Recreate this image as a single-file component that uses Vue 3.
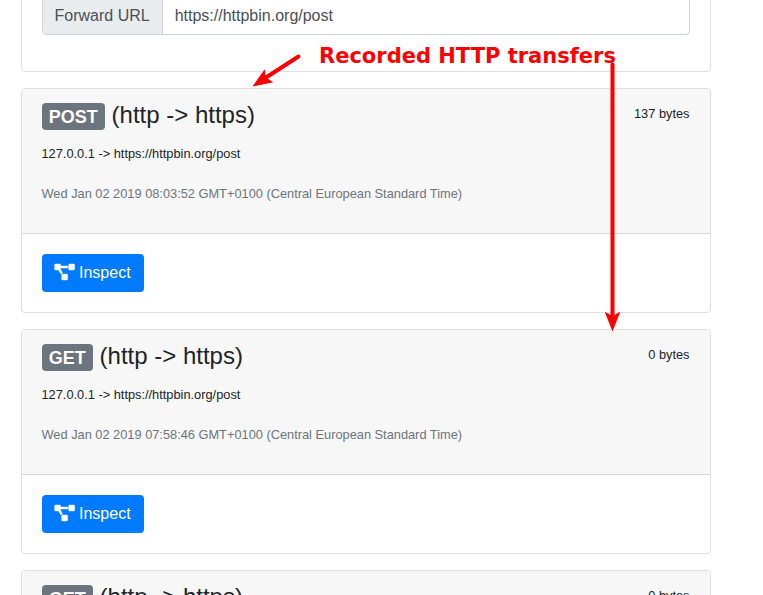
<script setup>
const transfers = [
  { method: 'POST', size: '137 bytes', time: 'Wed Jan 02 2019 08:03:52 GMT+0100 (Central European Standard Time)' },
  { method: 'GET', size: '0 bytes', time: 'Wed Jan 02 2019 07:58:46 GMT+0100 (Central European Standard Time)' },
  { method: 'GET', size: '0 bytes', time: 'Wed Jan 02 2019 07:58:46 GMT+0100 (Central European Standard Time)' },
]
</script>

<template>
  <main class="page">
    <section class="card settings">
      <div class="input-group">
        <span class="prepend">Forward URL</span>
        <span class="field">https://httpbin.org/post</span>
      </div>
    </section>

    <article v-for="(t, i) in transfers" :key="i" class="card">
      <header class="card-header">
        <div class="title-row">
          <h4><span class="badge">{{ t.method }}</span> (http -&gt; https)</h4>
          <small class="size">{{ t.size }}</small>
        </div>
        <p>127.0.0.1 -&gt; https://httpbin.org/post</p>
        <p class="muted">{{ t.time }}</p>
      </header>
      <div class="card-body">
        <button class="btn" type="button">
          <svg class="icon" viewBox="12 0 640 512" aria-hidden="true">
            <path fill="currentColor" stroke="currentColor" stroke-width="14" d="M384 320H256c-17.67 0-32 14.33-32 32v128c0 17.67 14.33 32 32 32h128c17.67 0 32-14.33 32-32V352c0-17.67-14.33-32-32-32zM192 32c0-17.67-14.33-32-32-32H32C14.33 0 0 14.33 0 32v128c0 17.67 14.33 32 32 32h95.72l73.16 128.04C211.98 300.98 232.4 288 256 288h.28L192 175.51V128h224V64H192V32zM608 0H480c-17.67 0-32 14.33-32 32v128c0 17.67 14.33 32 32 32h128c17.67 0 32-14.33 32-32V32c0-17.67-14.33-32-32-32z" />
          </svg>
          <span>Inspect</span>
        </button>
      </div>
    </article>

    <svg class="arrows" width="763" height="595" viewBox="0 0 763 595" aria-hidden="true">
      <g stroke="#f00" stroke-width="4" stroke-linecap="round" fill="none">
        <path d="M298.5 56.5L266 77.5" />
        <path d="M612.5 64.5V318" />
      </g>
      <g fill="#f00">
        <path d="M252.5 86.5L264.7 69.2L265.8 77.6L273.3 82.3Z" />
        <path d="M612.5 331.5L604.7 311.7L612.5 316L620.3 311.7Z" />
      </g>
    </svg>
    <div class="note">Recorded HTTP transfers</div>
  </main>
</template>

<style>
body {
  background: #fff;
}
</style>

<style scoped>
* {
  box-sizing: border-box;
}
.page {
  position: relative;
  height: 595px;
  overflow: hidden;
  padding: 0 52.5px 0 20.5px;
  background: #fff;
  color: #212529;
  font: 16px/1.5 "Liberation Sans", Arial, sans-serif;
}
.card {
  height: 225px;
  margin-bottom: 16px;
  border: 1px solid #dfdfdf;
  border-radius: 4px;
  background: #fff;
  overflow: hidden;
}
.settings {
  height: 92px;
  margin-top: -20px;
  padding: 16px 20px;
}
.input-group {
  display: flex;
  height: 38px;
  border: 1px solid #ced4da;
  border-radius: 4px;
  overflow: hidden;
  color: #495057;
}
.prepend {
  padding: 6px 12px;
  background: #e9ecef;
  border-right: 1px solid #ced4da;
}
.field {
  flex: 1;
  padding: 6px 12px;
}
.card-header {
  height: 145px;
  padding: 12px 20px;
  background: #f7f7f7;
  border-bottom: 1px solid #d9d9d9;
}
.title-row {
  display: flex;
  justify-content: space-between;
  height: 41px;
}
h4 {
  margin: 0;
  font-size: 24px;
  font-weight: 400;
  line-height: 28.8px;
}
.badge {
  display: inline-block;
  padding: 5.5px 7.2px 3.5px;
  border-radius: 4px;
  background: #6c757d;
  color: #fff;
  font-size: 18px;
  font-weight: 700;
  line-height: 18px;
  vertical-align: baseline;
}
.size {
  padding-top: 1px;
  font-size: 12.8px;
  line-height: 24px;
}
p {
  margin: 0 0 16px;
  font-size: 12.8px;
  line-height: 24px;
}
.muted {
  color: #6c757d;
}
.card-body {
  padding: 20px;
}
.btn {
  display: flex;
  align-items: center;
  gap: 4.5px;
  height: 38px;
  padding: 0 13px;
  border: 0;
  border-radius: 4px;
  background: #007bff;
  color: #fff;
  font: inherit;
}
.icon {
  width: 20px;
  height: 16px;
  margin-bottom: 2px;
  overflow: visible;
}
.arrows {
  position: absolute;
  left: 0;
  top: 0;
}
.note {
  position: absolute;
  left: 319px;
  top: 44px;
  color: #f00;
  font: 700 21px/25px "DejaVu Sans", sans-serif;
  white-space: nowrap;
}
</style>
